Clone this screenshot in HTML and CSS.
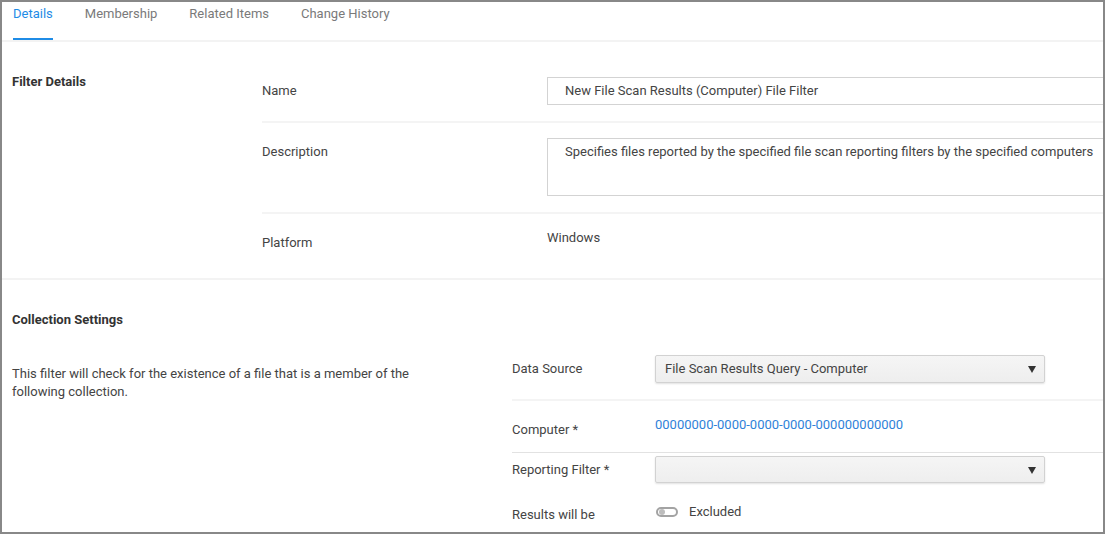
FILE: index.html
```html
<!DOCTYPE html>
<html>
<head>
<meta charset="utf-8">
<link rel="stylesheet" href="styles.css">
</head>
<body>
<div class="frame">
  <div class="tabs">
    <div class="tab active">Details</div>
    <div class="tab">Membership</div>
    <div class="tab">Related Items</div>
    <div class="tab">Change History</div>
  </div>

  <section class="section filter">
    <div class="sec-head">Filter Details</div>
    <div class="rows">
      <div class="row r-name">
        <div class="label">Name</div>
        <div class="textbox">New File Scan Results (Computer) File Filter</div>
      </div>
      <div class="row r-desc">
        <div class="label">Description</div>
        <div class="textarea">Specifies files reported by the specified file scan reporting filters by the specified computers</div>
      </div>
      <div class="row r-plat">
        <div class="label">Platform</div>
        <div class="value">Windows</div>
      </div>
    </div>
  </section>

  <section class="section collection">
    <div class="sec-head">Collection Settings</div>
    <div class="coll-body">
      <p class="coll-text">This filter will check for the existence of a file that is a member of the following collection.</p>
      <div class="crows">
        <div class="crow c-source">
          <div class="clabel">Data Source</div>
          <div class="select">File Scan Results Query - Computer<span class="caret"></span></div>
        </div>
        <div class="crow c-comp">
          <div class="clabel">Computer *</div>
          <a class="link">00000000-0000-0000-0000-000000000000</a>
        </div>
        <div class="crow c-rep">
          <div class="clabel short">Reporting Filter *</div>
          <div class="select short"><span class="caret"></span></div>
        </div>
        <div class="crow c-res">
          <div class="clabel">Results will be</div>
          <div class="toggle-wrap"><span class="toggle"><span class="knob"></span></span><span class="toggle-text">Excluded</span></div>
        </div>
      </div>
    </div>
  </section>
</div>
</body>
</html>
```

FILE: styles.css
```css
html, body {
  margin: 0;
  padding: 0;
  background: #fff;
}
body {
  font-family: Roboto, "Liberation Sans", sans-serif;
  font-size: 13px;
  color: #444;
}
.frame {
  width: 1105px;
  height: 534px;
  box-sizing: border-box;
  border: 2px solid #888;
  overflow: hidden;
  background: #fff;
}
.tabs {
  display: flex;
  height: 38px;
  padding-left: 11px;
  border-bottom: 2px solid #f3f3f3;
}
.tab {
  height: 38px;
  box-sizing: border-box;
  padding-top: 4px;
  line-height: 16px;
  margin-right: 32px;
  color: #7a7a7a;
  border-bottom: 2px solid transparent;
  white-space: nowrap;
}
.tab.active {
  color: #1f8ce6;
  border-bottom-color: #1f8ce6;
}

.section {
  border-bottom: 2px solid #f3f3f3;
}
.sec-head {
  font-weight: 700;
  line-height: 16px;
  color: #333;
  padding-left: 10px;
}
.filter {
  display: grid;
  grid-template-columns: 260px 1fr;
  padding-top: 20px;
  height: 238px;
  box-sizing: border-box;
}
.filter .sec-head {
  margin-top: 12px;
}
.row {
  display: flex;
  align-items: flex-start;
  padding: 15px 0 16px;
  border-bottom: 2px solid #f4f4f4;
}
.r-plat {
  border-bottom: none;
  padding-bottom: 0;
}
.label {
  width: 285px;
  flex: none;
  line-height: 28px;
}
.textbox, .textarea {
  width: 580px;
  flex: none;
  box-sizing: border-box;
  border: 1px solid #d3d3d3;
  padding: 0 17px;
  color: #444;
  white-space: nowrap;
}
.textbox {
  height: 28px;
  line-height: 26px;
}
.textarea {
  height: 58px;
  line-height: 18px;
  padding-top: 4px;
}
.value {
  line-height: 18px;
}

.collection {
  padding-top: 32px;
  height: 260px;
  box-sizing: border-box;
  border-bottom: none;
}
.coll-body {
  display: flex;
  margin-top: 12px;
}
.coll-text {
  width: 510px;
  flex: none;
  box-sizing: border-box;
  padding: 0 90px 0 10px;
  margin: 25px 0 0;
  line-height: 18px;
}
.crows {
  flex: 1;
}
.crow {
  display: flex;
  align-items: flex-start;
}
.clabel {
  width: 143px;
  flex: none;
  line-height: 28px;
}
.c-source {
  padding: 15px 0 16px;
  border-bottom: 2px solid #f4f4f4;
}
.c-comp {
  padding: 15px 0 8px;
  border-bottom: 1px solid #e2e2e2;
}
.c-rep {
  padding: 3px 0 18px;
}
.clabel.short {
  line-height: 27px;
}
.select {
  position: relative;
  width: 390px;
  height: 28px;
  box-sizing: border-box;
  border: 1px solid #d2d2d2;
  border-radius: 2px;
  background: linear-gradient(#f5f5f5, #eeeeee);
  box-shadow: 0 1px 2px rgba(0, 0, 0, 0.12);
  padding-left: 9px;
  line-height: 26px;
  color: #444;
}
.select.short {
  height: 27px;
}
.caret {
  position: absolute;
  right: 8px;
  top: 50%;
  margin-top: -3px;
  width: 0;
  height: 0;
  border-left: 4px solid transparent;
  border-right: 4px solid transparent;
  border-top: 7px solid #333;
}
.link {
  color: #2f82d9;
  line-height: 18px;
  text-decoration: none;
}
.toggle-wrap {
  display: flex;
  align-items: center;
  height: 22px;
  padding-left: 1px;
}
.toggle {
  display: inline-flex;
  align-items: center;
  width: 22px;
  height: 10px;
  box-sizing: border-box;
  border: 2px solid #a3a3a3;
  border-radius: 6px;
  background: #fff;
  padding-left: 1px;
}
.knob {
  width: 6px;
  height: 6px;
  border-radius: 50%;
  background: #bdbdbd;
}
.toggle-text {
  margin-left: 11px;
  line-height: 22px;
}
```
